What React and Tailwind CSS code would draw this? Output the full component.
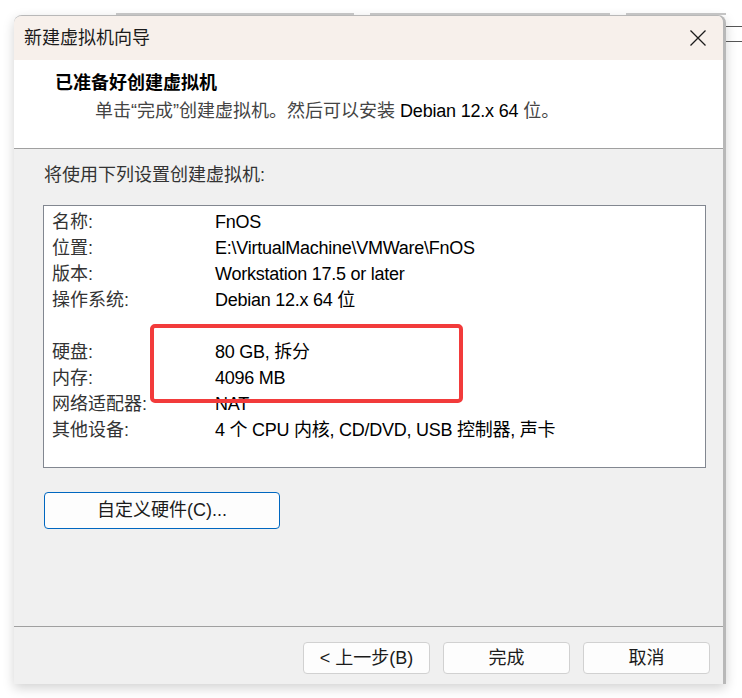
const rows = [
  { label: '名称:', value: 'FnOS' },
  { label: '位置:', value: 'E:\\VirtualMachine\\VMWare\\FnOS' },
  { label: '版本:', value: 'Workstation 17.5 or later' },
  { label: '操作系统:', value: 'Debian 12.x 64 位' },
  { label: '', value: '' },
  { label: '硬盘:', value: '80 GB, 拆分' },
  { label: '内存:', value: '4096 MB' },
  { label: '网络适配器:', value: 'NAT' },
  { label: '其他设备:', value: '4 个 CPU 内核, CD/DVD, USB 控制器, 声卡' },
];

function FooterButton({ children }) {
  return (
    <button
      type="button"
      className="flex h-[32px] w-[127px] items-center justify-center rounded-[4px] border border-[#d1d1d1] bg-[#fdfdfd] text-[18px] text-[#1b1b1b]"
    >
      {children}
    </button>
  );
}

export default function App() {
  return (
    <div className="relative h-[698px] w-[742px] overflow-hidden bg-white font-['Liberation_Sans','Noto_Sans_CJK_SC',sans-serif] text-[#1b1b1b]">
      {/* windows behind */}
      <div className="absolute left-[116px] top-[13px] h-[2px] w-[238px] bg-[#c4c4c4]" />
      <div className="absolute left-[370px] top-[13px] h-[2px] w-[240px] bg-[#c4c4c4]" />
      <div className="absolute left-[626px] top-[13px] h-[2px] w-[100px] bg-[#c4c4c4]" />
      <div className="absolute left-[726px] top-[26px] h-[1px] w-[16px] bg-[#555]" />
      <div className="absolute left-[726px] top-[41px] h-[1px] w-[16px] bg-[#555]" />

      <div className="ml-[14px] mt-[15px] flex h-[669px] w-[712px] flex-col overflow-hidden rounded-t-[8px] border-r-[3px] border-t border-[#b8b8b8] bg-[#f0f0f0] shadow-[0_4px_12px_rgba(0,0,0,0.18)]">
        {/* title bar */}
        <div className="flex h-[44px] shrink-0 items-center justify-between bg-[#f7f0eb] pl-[10px] pr-[15px]">
          <span className="text-[18px] leading-none">新建虚拟机向导</span>
          <svg width="18" height="18" viewBox="0 0 18 18" className="mr-[1px]">
            <path d="M1.5 1.5 L16.5 16.5 M16.5 1.5 L1.5 16.5" stroke="#1b1b1b" strokeWidth="1.3" fill="none" />
          </svg>
        </div>

        {/* header */}
        <div className="h-[89px] shrink-0 border-b border-[#a0a0a0] bg-white pl-[41px] pt-[10px]">
          <div className="text-[18px] font-bold leading-[26px] text-black">已准备好创建虚拟机</div>
          <div className="ml-[40px] mt-[2px] text-[18px] leading-[26px] text-[#444]">
            单击“完成”创建虚拟机。然后可以安装{' '}
            <span className="tracking-[-0.2px] text-black">Debian 12.x 64</span> 位。
          </div>
        </div>

        {/* body */}
        <div className="flex h-[478px] shrink-0 flex-col border-b border-[#a0a0a0] pl-[29px] pt-[13px]">
          <div className="pl-[1px] text-[18px] leading-[26px] text-[#333]">将使用下列设置创建虚拟机:</div>

          <div className="relative mt-[17px] h-[263px] w-[663px] border border-[#828790] bg-white pl-[8px] pt-[3px]">
            {rows.map((row, index) => (
              <div key={index} className="flex h-[26px] items-center text-[18px] leading-[26px]">
                <span className="w-[163px] shrink-0 text-[#333]">{row.label}</span>
                <span className="whitespace-nowrap tracking-[-0.25px] text-black">{row.value}</span>
              </div>
            ))}
            <div className="absolute left-[106px] top-[118px] h-[79px] w-[313px] rounded-[5px] border-[4px] border-[#f23b3b]" />
          </div>

          <button
            type="button"
            className="ml-[1px] mt-[24px] flex h-[37px] w-[236px] items-center justify-center rounded-[4px] border border-[#0067c0] bg-[#fdfdfd] text-[18px] text-[#1b1b1b]"
          >
            自定义硬件(C)...
          </button>
        </div>

        {/* footer */}
        <div className="flex flex-1 items-start justify-end gap-[13px] pr-[13px] pt-[15px]">
          <FooterButton>&lt; 上一步(B)</FooterButton>
          <FooterButton>完成</FooterButton>
          <FooterButton>取消</FooterButton>
        </div>
      </div>
    </div>
  );
}
